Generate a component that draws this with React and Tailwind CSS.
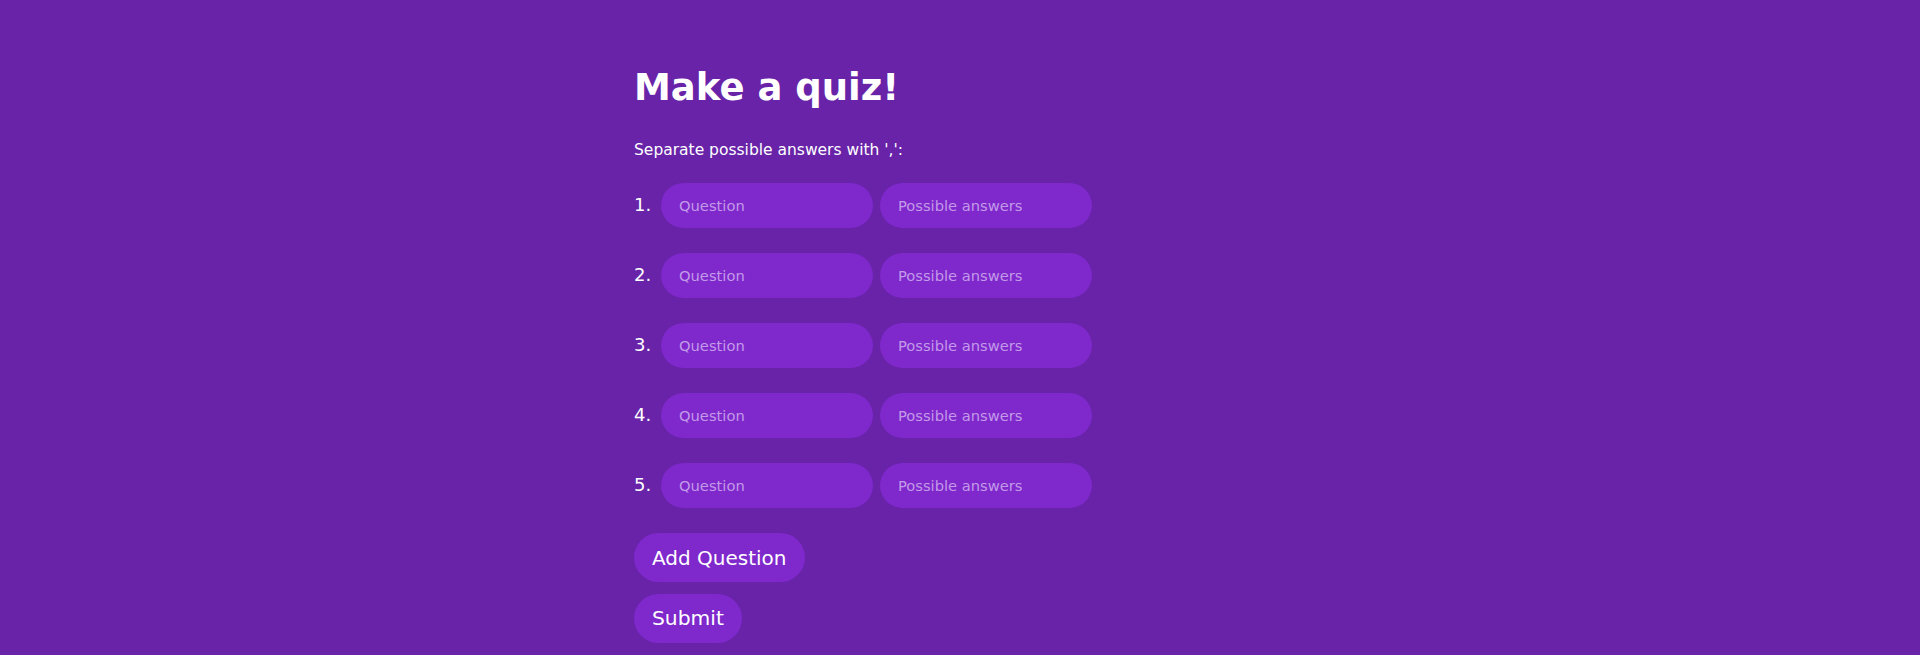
import { useState } from "react";

const inputCls =
  "h-[45px] w-[212px] rounded-full bg-[#7f28cc] pl-[18px] pr-4 text-[14.7px] text-white outline-none placeholder:text-[#c39ae9]";

function QuestionRow({ n }) {
  return (
    <div className="flex items-center">
      <span className="-mt-0.5 w-[27px] shrink-0 text-[18px] leading-none">{n}.</span>
      <div className="flex gap-[7px]">
        <input className={inputCls} placeholder="Question" />
        <input className={inputCls} placeholder="Possible answers" />
      </div>
    </div>
  );
}

export default function App() {
  const [rows, setRows] = useState([1, 2, 3, 4, 5]);

  return (
    <main className="min-h-[655px] bg-[#6823a8] text-white [font-family:'DejaVu_Sans',Verdana,sans-serif]">
      <div className="mx-auto w-[652px] pt-[66px]">
        <h1 className="text-[37px] font-bold leading-[1.164]">Make a quiz!</h1>
        <p className="mt-[32px] text-[15.5px] leading-[1.164]">Separate possible answers with ',':</p>

        <div className="mt-[24px] flex flex-col gap-[25px]">
          {rows.map((n) => (
            <QuestionRow key={n} n={n} />
          ))}
        </div>

        <div className="mt-[25px] flex flex-col items-start gap-[12px]">
          <button
            type="button"
            onClick={() => setRows((prev) => [...prev, prev.length + 1])}
            className="h-[49px] rounded-full bg-[#7f28cc] px-[18px] text-[20px]"
          >
            Add Question
          </button>
          <button type="button" className="h-[49px] rounded-full bg-[#7f28cc] px-[18px] text-[20.3px]">
            Submit
          </button>
        </div>
      </div>
    </main>
  );
}
